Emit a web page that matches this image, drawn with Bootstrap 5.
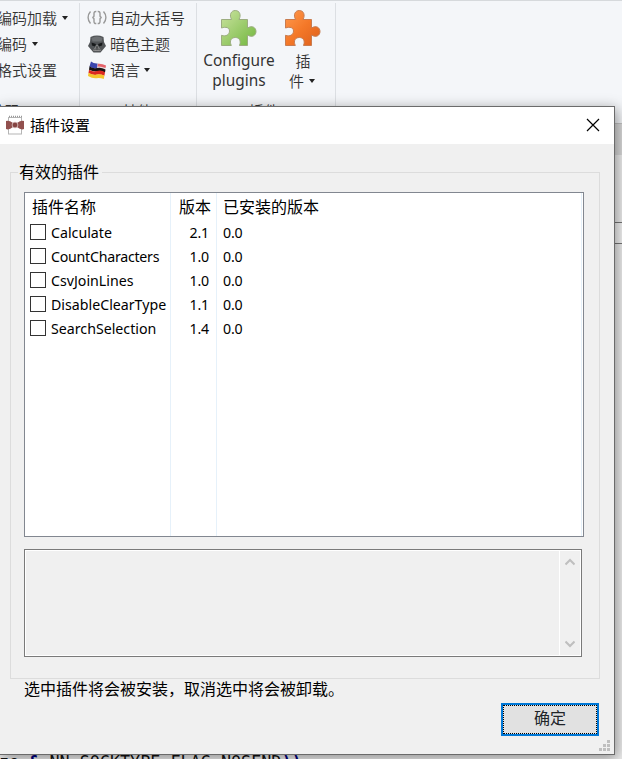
<!DOCTYPE html>
<html lang="zh-CN">
<head>
<meta charset="utf-8">
<title>插件设置</title>
<link href="https://cdn.jsdelivr.net/npm/bootstrap@5.3.0/dist/css/bootstrap.min.css" rel="stylesheet">
<style>
body{width:622px;height:759px;overflow:hidden;font-family:"Noto Sans","Noto Sans CJK SC",sans-serif;font-size:15px;line-height:26px;color:#000;background:#f4f6f9}
.cjk{font-family:"Noto Sans CJK SC",sans-serif;font-weight:350}
.app{width:622px;height:759px}
.ribbon{height:124px;border-top:1px solid #d6d9dc;border-bottom:1px solid #c4c4c4;background:#f4f6f9;color:#333}
.rgroup{margin-top:2px;height:116px;border-right:1px solid #dcdfe3}
.g1{width:80px}.g2{width:117px}.g3{width:139px}
.rrows{height:93px;padding-top:2px}
.rrow{height:26px;white-space:nowrap}
.g1 .rrow{margin-left:-3px}
.g2 .rrow{padding-left:7px}
.g2 .rrow svg{margin-right:3px}
.caret{width:0;height:0;border:3.5px solid transparent;border-top:4px solid #222;border-bottom:0;margin-left:5px}
.g2 .caret{margin-left:4px}
.glabel{line-height:26px;height:22px;padding-top:2px}
.big{line-height:20px;text-align:center;font-size:15px}
.cfg{width:84px;font-size:15.4px;font-weight:400}
.tabs{height:31px;background:#dadada}
.editor{background:#efefef;padding-top:67px}
.edline{height:22px;border:1px solid #777;border-width:1px 0;background:#f5f5f5}
.code{font:16.75px/22px "DejaVu Sans Mono",monospace;white-space:pre;margin-left:-1px;color:#111;height:8px;overflow:hidden;margin-top:auto}
.code b{color:#000080;font-weight:700}
.dlg{left:-1px;top:106px;width:616px;height:649px;background:#f0f0f0;border:1px solid #6b6b6b;box-shadow:2px 3px 13px rgba(0,0,0,.42)}
.tbar{height:37px;background:#fff;padding:0 14px 0 6px}
.tbar svg{margin-top:-1px}
.tbar .cap{margin-left:6px;margin-top:-2px}
.grp{margin:28px 14px 0 10px;height:507px;border:1px solid #dcdcdc;padding:0 15px 0 13px}
.grp .lg{font-size:16px;line-height:22px;height:24px;margin-top:-13px;margin-left:-6px;padding:0 2px 0 1px;background:#f0f0f0;width:84px;align-self:flex-start;white-space:nowrap}
.list{margin-top:8px;width:560px;height:345px;background:#fff;border:1px solid #828790}
.col-a{width:146px;border-right:1px solid #e6f1fa;padding-left:5px}
.col-b{width:46px;border-right:1px solid #e6f1fa;padding-right:7px;text-align:right}
.col-c{width:365px;border-right:1px solid #e6f1fa;padding-left:6px}
.hd{font-size:16px;height:27px;line-height:27px;white-space:nowrap}
.it{height:24px;font-size:14.2px;line-height:24px;white-space:nowrap}
.it .nm{padding-top:1px}
.nm.tight{letter-spacing:-.25px}
.col-b .it,.col-c .it{padding-top:1px}
.col-b .it,.col-c .it{letter-spacing:-.2px}
.cb{width:16px;height:16px;border:1px solid #333;background:#fff;margin-right:5px}
.memo{margin-top:12px;width:558px;height:108px;border:1px solid #7a7a7a;padding:1px;background:#fff}
.memo .pane{background:#f0f0f0}
.sb{width:20px;background:#f0f0f0;margin-left:1px;padding:7px 0}
.sb svg{margin-right:1px}
.note{font-size:16px;line-height:24px;height:24px;margin-left:24px;margin-top:-3px}
.okb{width:98px;height:33px;margin-right:15px;margin-top:3px;border:2px solid #0078d7;border-radius:0;background:#e1e1e1;font-size:16px;line-height:25px;padding:0 0 4px;outline:1px dotted #000;outline-offset:-3px}
.grip{right:3px;bottom:2px}
</style>
<script src="https://cdn.jsdelivr.net/npm/bootstrap@5.3.0/dist/js/bootstrap.bundle.min.js"></script>
</head>
<body>
<div class="app position-relative overflow-hidden d-flex flex-column">
  <div class="ribbon d-flex flex-shrink-0 cjk">
    <div class="rgroup g1">
      <div class="rrows">
        <div class="rrow d-flex align-items-center">编码加载<i class="caret"></i></div>
        <div class="rrow d-flex align-items-center">编码<i class="caret"></i></div>
        <div class="rrow d-flex align-items-center">格式设置</div>
      </div>
      <div class="glabel" style="margin-left:-10px">编码</div>
    </div>
    <div class="rgroup g2">
      <div class="rrows">
        <div class="rrow d-flex align-items-center">
          <svg width="20" height="16" viewBox="0 0 20 16" fill="none" stroke="#999" stroke-width="1.400"><path d="M3.500 1.500C.3 5 .3 10 3.500 13.500M16.500 1.500C19.700 5 19.700 10 16.500 13.500"/><path d="M9.300 1.500Q7 1.300 7 3.500V5.500Q7 7.500 5.200 7.500 7 7.500 7 9.500V11.500Q7 13.700 9.300 13.500M10.700 1.500Q13 1.300 13 3.500V5.500Q13 7.500 14.800 7.500 13 7.500 13 9.500V11.500Q13 13.700 10.700 13.500"/></svg>自动大括号</div>
        <div class="rrow d-flex align-items-center">
          <svg width="20" height="18" viewBox="0 0 20 18"><path d="M3.500 2Q10-.8 16.500 2L17 7 19 11 16.500 14 13.500 17.500H6.500L3.500 14 1 11 3 7Z" fill="#515457"/><path d="M4.500 3Q10 0 15.500 3L14.500 6.500H5.500Z" fill="#6d7073"/><path d="M4.500 7.500 9 9 8 11.500 5 10.500ZM15.500 7.500 11 9 12 11.500 15 10.500Z" fill="#17191b"/><path d="M10 10 6.500 15.500H13.500Z" fill="#25282a" stroke="#999" stroke-width=".8"/><path d="M8.700 13V15.500M10 12V15.500M11.300 13V15.500" stroke="#aaa" stroke-width=".6"/></svg>暗色主题</div>
        <div class="rrow d-flex align-items-center">
          <svg width="20" height="19" viewBox="0 0 20 19"><path d="M4 .5Q7 3 11 2.500T19 4.500L18 9Q13 7 10 7.300T2.500 5.500Z" fill="#e9dce0"/><path d="M4 .5Q7 3 10.500 2.500L10 7.500Q6 8 2.500 5.500Z" fill="#3b46ad"/><path d="M11 2.700Q15 2.500 19 4.500L18.500 7Q14 5 10.500 5.500Z" fill="#e5636a"/><path d="M2.500 5.300Q6 8 10 7T18.500 8.500L18 11.500Q13 9.500 10 10.300T2 8.800Z" fill="#171212"/><path d="M2 8.800Q6 11.500 10 10.100T18 11.200L17.400 14.800Q13 13 9.500 13.800T1.500 12Z" fill="#dc2921"/><path d="M1.500 11.800Q6 14.500 9.500 13.500T17.400 14.500L16.800 18Q13 16.500 9.500 17.200T1 15Z" fill="#f5c52d"/></svg>语言<i class="caret"></i></div>
      </div>
      <div class="glabel" style="margin-left:42px">其他</div>
    </div>
    <div class="rgroup g3">
      <div class="rrows d-flex">
        <div class="cfg big d-flex flex-column align-items-center" style="font-family:'Noto Sans'">
          <svg width="37" height="38" viewBox="0 0 37 38" style="margin:4px 2px 4px 0"><defs><linearGradient id="gg" x1="0" y1="0" x2="1" y2="1"><stop offset="0" stop-color="#cbe3a0"/><stop offset="1" stop-color="#70b63c"/></linearGradient></defs><path d="M1.500 10.500H11.600C9 6 11 1.500 15.300 1.500S21.500 6 19 10.500H27.500V19C32 16 36 18.500 36 22.500S32 29 27.500 26V36.500H19.500C21.500 31.500 19 28.500 15.300 28.500S9 31.500 11.300 36.500H1.500V26.300C6 28 9.500 25.500 9.500 22S6 17.500 1.500 19Z" fill="url(#gg)" stroke="#9cad80" stroke-width="1"/></svg>
          <div>Configure<br>plugins</div>
        </div>
        <div class="big d-flex flex-column align-items-center" style="width:44px">
          <svg width="37" height="38" viewBox="0 0 37 38" style="margin:4px 2px 4px 0"><defs><linearGradient id="og" x1="0" y1="0" x2="1" y2="1"><stop offset="0" stop-color="#ff9b50"/><stop offset=".5" stop-color="#f47828"/><stop offset="1" stop-color="#dc5f1c"/></linearGradient></defs><path d="M1.500 10.500H11.600C9 6 11 1.500 15.300 1.500S21.500 6 19 10.500H27.500V19C32 16 36 18.500 36 22.500S32 29 27.500 26V36.500H19.500C21.500 31.500 19 28.500 15.300 28.500S9 31.500 11.300 36.500H1.500V26.300C6 28 9.500 25.500 9.500 22S6 17.500 1.500 19Z" fill="url(#og)" stroke="#c87c50" stroke-width="1"/></svg>
          <div>插</div><div class="d-flex align-items-center" style="margin-left:-2px">件<i class="caret"></i></div>
        </div>
      </div>
      <div class="glabel" style="margin-left:52px">插件</div>
    </div>
  </div>
  <div class="tabs flex-shrink-0"></div>
  <div class="editor flex-grow-1 d-flex flex-column">
    <div class="edline"></div>
    <div class="code">ze <b>&amp;</b> NN_SOCKTYPE_FLAG_NOSEND<b>))</b></div>
  </div>

  <div class="dlg position-absolute d-flex flex-column">
    <div class="tbar d-flex align-items-center flex-shrink-0 cjk">
      <svg width="18" height="20" viewBox="0 0 18 20"><rect x="2.500" y="2.500" width="13" height="16.500" fill="#fff" stroke="#b5b5b5"/><path d="M3 1.500H16" stroke="#999" stroke-width="1.500" stroke-dasharray="1 1"/><path d="M0 6Q3 5 7 8H11Q15 5 18 6V14Q15 15.500 11 12H7Q3 15.500 0 14Z" fill="#91504e"/><circle cx="9" cy="10" r="2.900" fill="#854442" stroke="#e0caca" stroke-width=".8"/></svg>
      <span class="cap fw-normal">插件设置</span>
      <svg class="ms-auto" width="14" height="14" viewBox="0 0 14 14" stroke="#000" stroke-width="1.200"><path d="M1 1 13 13M13 1 1 13"/></svg>
    </div>
    <div class="grp d-flex flex-column flex-shrink-0">
      <div class="lg cjk fw-normal">有效的插件</div>
      <div class="list d-flex flex-shrink-0">
        <div class="col-a">
          <div class="hd cjk fw-normal" style="padding-left:2px">插件名称</div>
          <div class="it d-flex align-items-center"><span class="cb"></span><span class="nm">Calculate</span></div>
          <div class="it d-flex align-items-center"><span class="cb"></span><span class="nm tight">CountCharacters</span></div>
          <div class="it d-flex align-items-center"><span class="cb"></span><span class="nm">CsvJoinLines</span></div>
          <div class="it d-flex align-items-center"><span class="cb"></span><span class="nm">DisableClearType</span></div>
          <div class="it d-flex align-items-center"><span class="cb"></span><span class="nm">SearchSelection</span></div>
        </div>
        <div class="col-b">
          <div class="hd cjk fw-normal" style="margin-right:-2px">版本</div>
          <div class="it">2.1</div><div class="it">1.0</div><div class="it">1.0</div><div class="it">1.1</div><div class="it">1.4</div>
        </div>
        <div class="col-c">
          <div class="hd cjk fw-normal">已安装的版本</div>
          <div class="it">0.0</div><div class="it">0.0</div><div class="it">0.0</div><div class="it">0.0</div><div class="it">0.0</div>
        </div>
      </div>
      <div class="memo d-flex flex-shrink-0">
        <div class="pane flex-grow-1"></div>
        <div class="sb d-flex flex-column justify-content-between align-items-center">
          <svg width="10" height="8" viewBox="0 0 10 8" fill="none" stroke="#bfbfbf" stroke-width="2"><path d="M.5 6.500 5 2 9.500 6.500"/></svg>
          <svg width="10" height="8" viewBox="0 0 10 8" fill="none" stroke="#bfbfbf" stroke-width="2"><path d="M.5 1.500 5 6 9.500 1.500"/></svg>
        </div>
      </div>
    </div>
    <div class="note cjk fw-normal">选中插件将会被安装，取消选中将会被卸载。</div>
    <button class="btn okb cjk align-self-end fw-normal">确定</button>
    <svg class="grip position-absolute" width="12" height="12" viewBox="0 0 12 12" fill="#bfbfbf"><path d="M8 0h3v3H8zM4 4h3v3H4zM8 4h3v3H8zM0 8h3v3H0zM4 8h3v3H4zM8 8h3v3H8z"/></svg>
  </div>
</div>
</body>
</html>
